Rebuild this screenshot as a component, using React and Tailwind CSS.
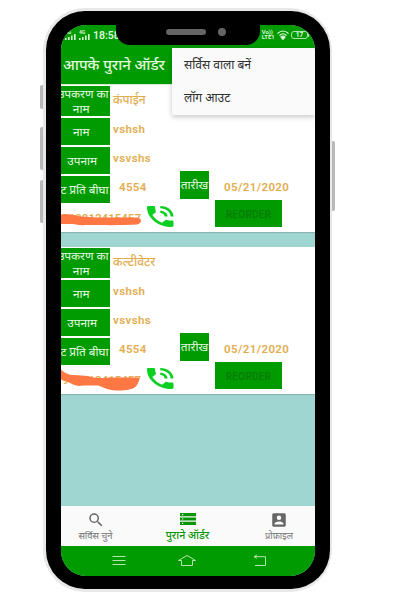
import React from "react";

const orders = [
  {
    item: "कंपाईन",
    scribble: "M0 10.5 C6 10 13 10.5 17 12 C28 14 52 13.5 75 13.5 C81 13.5 82 19 76 20.5 C60 21.5 40 21 24 21 C18 22 15 19.5 10 20 L0 20 Z",
  },
  {
    item: "कल्टीवेटर",
    scribble: "M0 3.5 C3 7 8 9 13 9 L27 10 C35 13 44 12 50 11.5 L70 11.5 C75 11.5 80 11 78 14 C77 18 75 22 70 23 C63 25 54 25 48 23.5 C42 22 39 19 35 19.5 L22 19.5 C15 21 12 18 8 16.5 L0 13.5 Z",
  },
];

function Label({ children, size = "h-[27.5px] w-[48.5px]", className = "justify-center" }) {
  return (
    <div className={`flex shrink-0 items-center overflow-hidden bg-[#009b00] pt-[1px] text-[11.8px] leading-[15px] whitespace-nowrap text-[#e4f7e0] ${size} ${className}`}>
      {children}
    </div>
  );
}

function CallIcon() {
  return (
    <svg viewBox="3 3 18 18" preserveAspectRatio="none" className="h-[21px] w-[26.5px]" fill="#0bd021">
      <path d="M20 15.5c-1.25 0-2.45-.2-3.57-.57-.35-.11-.74-.03-1.02.24l-2.2 2.2c-2.83-1.44-5.15-3.75-6.59-6.59l2.2-2.21c.28-.26.36-.65.25-1C8.7 6.45 8.5 5.25 8.5 4c0-.55-.45-1-1-1H4c-.55 0-1 .45-1 1 0 9.39 7.61 17 17 17 .55 0 1-.45 1-1v-3.5c0-.55-.45-1-1-1zM19 12h2c0-4.97-4.03-9-9-9v2c3.87 0 7 3.13 7 7zm-4 0h2c0-2.76-2.24-5-5-5v2c1.66 0 3 1.34 3 3z" />
    </svg>
  );
}

function OrderCard({ order }) {
  return (
    <section className="flex h-[147px] shrink-0 bg-white shadow-[0_1px_1px_#8bb4b1]">
      <div className="flex w-[119px] flex-col pt-[1.3px]">
        <div className="flex h-[32px]">
          <Label size="h-[30.5px] w-[48.5px]" className="justify-end pr-[1px] text-center">
            <div>उपकरण का<br /><span className="pr-[4px]">नाम</span></div>
          </Label>
          <span className="pt-[5px] pl-[3.5px] text-[12px] leading-[18px] font-medium whitespace-nowrap text-[#e3ad4f]">{order.item}</span>
        </div>
        <div className="flex h-[29px]">
          <Label className="justify-center pr-[8px]">नाम</Label>
          <span className="pt-[3px] pl-[3.5px] text-[11.5px] leading-[16px] font-semibold tracking-[0.4px] text-[#e3ad4f]">vshsh</span>
        </div>
        <div className="flex h-[29px]">
          <Label className="justify-center pr-[6px]">उपनाम</Label>
          <span className="pt-[3px] pl-[3.5px] text-[11.5px] leading-[16px] font-semibold tracking-[0.4px] text-[#e3ad4f]">vsvshs</span>
        </div>
        <div className="flex h-[27.5px]">
          <Label className="justify-end pr-[1px]">ट प्रति बीघा</Label>
          <span className="pt-[3px] pl-[9.5px] text-[11.5px] leading-[16px] font-semibold tracking-[0.35px] text-[#e3ad4f]">4554</span>
        </div>
        <div className="flex h-[27px] items-start">
          <div className="relative flex h-[26px] w-[86px] shrink-0 pr-[6px]">
            <span className="block w-full pt-[6.5px] text-right text-[11.5px] leading-[16px] font-semibold text-[#e3ad4f]">919812415457</span>
            <svg viewBox="0 0 86 26" className="absolute top-[1px] left-0 h-[26px] w-[86px]">
              <path d={order.scribble} fill="#ff7844" />
            </svg>
          </div>
          <div className="mt-[2.5px] shrink-0"><CallIcon /></div>
        </div>
      </div>
      <div className="flex flex-1 flex-col pt-[86.8px]">
        <div className="flex h-[28.5px]">
          <Label size="h-[27.5px] w-[29px]">तारीख</Label>
          <span className="pt-[7.5px] pl-[15px] text-[11.5px] leading-[16px] font-semibold tracking-[0.4px] whitespace-nowrap text-[#e3ad4f]">05/21/2020</span>
        </div>
        <button className="ml-[35px] h-[27.5px] w-[67px] bg-[#009b00] pt-[1px] text-[10px] font-medium tracking-[0.25px] text-[#087a08]">REORDER</button>
      </div>
    </section>
  );
}

function Signal({ x }) {
  return (
    <g transform={`translate(${x} 0)`} fill="#d9f4d5">
      <rect x="0" y="9" width="1.6" height="2" />
      <rect x="3" y="8" width="1.6" height="3" />
      <rect x="6" y="6.5" width="1.6" height="4.5" />
      <rect x="9" y="5" width="1.6" height="6" />
      <text x="0" y="4.8" fontSize="5" fontWeight="700">4G</text>
    </g>
  );
}

function StatusBar() {
  return (
    <div className="flex h-[22px] shrink-0 justify-between pt-[3px] text-[#dff7dc]">
      <div className="flex pl-[4px]">
        <svg viewBox="0 0 28 14" className="mt-[1px] h-[14px] w-[28px]">
          <Signal x={0} />
          <Signal x={14} />
        </svg>
        <span className="text-[10.5px] leading-[15px] font-semibold">18:58</span>
      </div>
      <div className="flex items-start pr-[6px]">
        <div className="pt-[2px] text-[5.8px] leading-[5px] font-bold">Vo))<br />LTE1</div>
        <svg viewBox="0 0 24 20" className="mt-[2px] ml-[2px] h-[10px] w-[12px]" fill="none" stroke="#dff7dc" strokeWidth="2.3">
          <path d="M1 7 Q12 -3 23 7M5 11 Q12 4 19 11" />
          <path d="M8 14 Q12 10 16 14 L12 19 Z" fill="#dff7dc" />
        </svg>
        <div className="mt-[3px] ml-[2.5px] flex h-[8px] w-[17px] items-center justify-center rounded-[3px] border border-[#aee3aa] text-[6.5px] leading-none font-bold">17</div>
        <div className="mt-[5.5px] h-[3px] w-[1px] bg-[#aee3aa]" />
      </div>
    </div>
  );
}

export default function App() {
  return (
    <main className="relative flex h-[600px] w-[400px] bg-white pt-[8px] pl-[43px] font-['Roboto','Noto_Sans',sans-serif]">
      <div className="absolute top-[85px] left-[40px] h-[24px] w-[4px] rounded-l-[2px] bg-[#b9b9b9]" />
      <div className="absolute top-[127px] left-[40px] h-[43px] w-[4px] rounded-l-[2px] bg-[#b9b9b9]" />
      <div className="absolute top-[180px] left-[40px] h-[43px] w-[4px] rounded-l-[2px] bg-[#b9b9b9]" />
      <div className="absolute top-[141px] left-[331px] h-[70px] w-[4px] rounded-r-[2px] bg-[#b9b9b9]" />
      <div className="relative h-[583.5px] w-[289px] rounded-[42px] bg-[#e9e8e8] p-[2.5px]">
        <div className="h-[578.5px] w-full rounded-[39px] bg-black pt-[14.5px] pl-[15.5px]">
          <div className="relative flex h-[550.5px] w-[254px] flex-col overflow-hidden rounded-[25px] bg-[#a0d6d1]">
            <header className="flex h-[59.5px] shrink-0 flex-col border-b border-[#d5eed2] bg-[#009b00]">
              <StatusBar />
              <h1 className="pt-[6.5px] pl-[2px] text-[15px] leading-[23px] font-medium whitespace-nowrap text-[#e3f7df]">आपके पुराने ऑर्डर</h1>
            </header>
            <div className="flex flex-1 flex-col gap-[15px]">
              {orders.map((order) => <OrderCard key={order.item} order={order} />)}
            </div>
            <nav className="flex h-[39.7px] shrink-0 bg-[#fafafa] text-[9.5px] leading-[12px] text-[#737373]">
              <div className="flex w-[69px] flex-col items-center pt-[5px]">
                <svg viewBox="0 0 24 24" className="h-[18px] w-[18px]" fill="#666">
                  <path d="M15.5 14h-.79l-.28-.27A6.47 6.47 0 0 0 16 9.5 6.5 6.5 0 1 0 9.5 16c1.61 0 3.09-.59 4.23-1.57l.27.28v.79l5 4.99L20.49 19l-4.99-5zm-6 0A4.5 4.5 0 1 1 14 9.5 4.5 4.5 0 0 1 9.5 14z" />
                </svg>
                <span className="mt-[1px] whitespace-nowrap">सर्विस चुने</span>
              </div>
              <div className="flex flex-1 flex-col items-center pt-[7px] pl-[2px] text-[10.6px] font-medium text-[#079507]">
                <svg viewBox="0 0 16 12" className="h-[12px] w-[16px]">
                  <path d="M0 0H16V3.2H0ZM0 4.4H16V7.6H0ZM0 8.8H16V12H0Z" fill="#079507" />
                  <path d="M2 1H3.2V2.2H2ZM2 5.4H3.2V6.6H2ZM2 9.8H3.2V11H2Z" fill="#fafafa" />
                </svg>
                <span className="mt-[5px] whitespace-nowrap">पुराने ऑर्डर</span>
              </div>
              <div className="flex w-[72px] flex-col items-center pt-[5px]">
                <svg viewBox="0 0 24 24" className="h-[18px] w-[18px]" fill="#666">
                  <path d="M3 5v14c0 1.1.89 2 2 2h14c1.1 0 2-.9 2-2V5c0-1.1-.9-2-2-2H5c-1.11 0-2 .9-2 2zm12 4a3 3 0 1 1-6 0 3 3 0 0 1 6 0zm-9 8c0-2 4-3.1 6-3.1s6 1.1 6 3.1v1H6v-1z" />
                </svg>
                <span className="mt-[1px] text-[9.2px] whitespace-nowrap">प्रोफ़ाइल</span>
              </div>
            </nav>
            <div className="flex h-[30px] shrink-0 items-start gap-[52px] bg-[#009b00] pt-[8px] pl-[51px]">
              <svg viewBox="0 0 14 14" className="h-[14px] w-[14px]" fill="none" stroke="#b5e6b1">
                <path d="M.5 2.5H13.5M.5 6.5H13.5M.5 10.5H13.5" />
              </svg>
              <svg viewBox="0 0 18 14" className="h-[14px] w-[18px]" fill="none" stroke="#b5e6b1">
                <path d="M.5 6.5L8 2Q9 1.3 10 2L17.5 6.5H14.5V11.5H3.5V6.5H.5" />
              </svg>
              <svg viewBox="0 0 14 14" className="ml-[5px] h-[14px] w-[14px]" fill="none" stroke="#b5e6b1">
                <path d="M4 1L1 2.7L4 4.5M1 2.7H12.5V11.5H2" />
              </svg>
            </div>
            <div className="absolute top-[22.5px] left-[111px] flex h-[67.5px] w-[143px] flex-col bg-[#fafafa] pt-[1.3px] pl-[12px] text-[12.1px] text-[#303030] shadow-[0_2px_5px_rgba(0,0,0,0.22)]">
              <span className="flex h-[34px] items-center whitespace-nowrap">सर्विस वाला बनें</span>
              <span className="flex h-[34px] items-center whitespace-nowrap">लॉग आउट</span>
            </div>
          </div>
        </div>
        <div className="absolute top-[15px] left-[73px] flex h-[22px] w-[144px] items-start rounded-b-[14px] bg-black pt-[6.5px] pl-[50px]">
          <div className="mt-[-0.5px] h-[6px] w-[40px] rounded-full bg-[#656565]" />
          <div className="mt-[-1.5px] ml-[11.5px] h-[8px] w-[8px] rounded-full bg-[#656565]" />
        </div>
      </div>
    </main>
  );
}
